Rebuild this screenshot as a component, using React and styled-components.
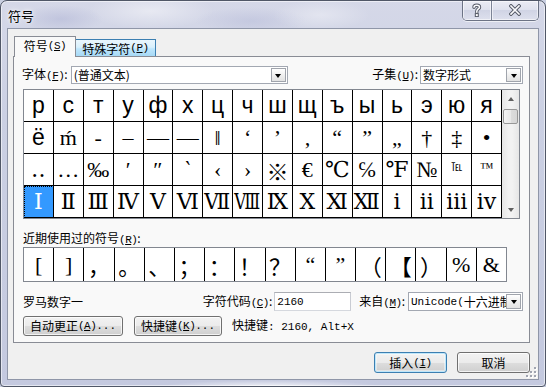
import React, { useLayoutEffect, useRef, useState } from 'react';
import styled, { createGlobalStyle, css } from 'styled-components';

const GlobalStyle = createGlobalStyle`
  html, body { margin: 0; padding: 0; background: #c9cfe1; }
  body {
    font-family: "Noto Sans CJK SC", "Liberation Sans", sans-serif;
    font-size: 12px;
    color: #000;
  }
  * { box-sizing: border-box; }
`;

const Window = styled.div`
  position: relative;
  width: 546px;
  height: 387px;
  display: flex;
  flex-direction: column;
  border: 1px solid #505767;
  border-radius: 7px 7px 4px 4px;
  overflow: hidden;
  background:
    radial-gradient(ellipse 90px 26px at 150px 10px, rgba(255,255,255,0.45), transparent 70%),
    radial-gradient(ellipse 70px 22px at 320px 14px, rgba(255,255,255,0.35), transparent 70%),
    radial-gradient(ellipse 60px 20px at 60px 18px, rgba(170,175,210,0.45), transparent 70%),
    radial-gradient(ellipse 80px 20px at 250px 20px, rgba(170,175,210,0.35), transparent 70%),
    radial-gradient(ellipse 160px 10px at 270px 386px, rgba(255,255,255,0.8), transparent 70%),
    linear-gradient(180deg, #d5d8e8 0%, #cbd0e3 30%, #c4c9df 100%);
  box-shadow: inset 0 0 0 1px rgba(255,255,255,0.55);
`;

const TitleBar = styled.div`
  height: 27px;
  display: flex;
  align-items: flex-start;
  padding-left: 7px;
`;

const Title = styled.div`
  padding-top: 6px;
  line-height: 17px;
  font-size: 13px;
  color: #000;
  text-shadow: 0 0 6px rgba(255,255,255,0.95), 0 0 3px rgba(255,255,255,0.9);
`;

const CaptionGroup = styled.div`
  margin-left: auto;
  margin-right: 6px;
  margin-top: -1px;
  display: flex;
  height: 21px;
  border: 1px solid #6c7385;
  border-top: none;
  border-radius: 0 0 5px 5px;
  overflow: hidden;
  box-shadow: 0 1px 0 rgba(255,255,255,0.6);
`;

const CaptionButton = styled.div`
  width: ${p => p.$w}px;
  height: 100%;
  display: flex;
  align-items: center;
  justify-content: center;
  background: linear-gradient(180deg, rgba(255,255,255,0.55) 0%, rgba(255,255,255,0.25) 50%, rgba(200,205,222,0.35) 51%, rgba(230,232,242,0.55) 100%);
  box-shadow: inset 0 0 0 1px rgba(255,255,255,0.55);
  & + & { border-left: 1px solid #7d8496; }
`;

const Client = styled.div`
  position: relative;
  flex: 1;
  margin: 0 6px 6px 6px;
  background: #f0f0f0;
  border: 1px solid #8f96a8;
  padding: 7px 0 6px 5px;
  display: flex;
  flex-direction: column;
`;

const TabStrip = styled.div`
  display: flex;
  align-items: flex-end;
  height: 21px;
  padding-left: 1px;
  margin-bottom: -1px;
  position: relative;
  z-index: 1;
`;

const Tab = styled.div`
  display: flex;
  align-items: center;
  justify-content: center;
  border: 1px solid #898c95;
  white-space: nowrap;
  ${p => p.$active ? css`
    width: 62px;
    height: 21px;
    border-bottom: none;
    background: #f9f9f9;
    padding-bottom: 3px;
  ` : css`
    width: 80px;
    height: 17px;
    margin-bottom: 1px;
    background: linear-gradient(180deg, #eaf6fd 0%, #d9f0fc 45%, #bee6fd 55%, #a7d9f5 100%);
    border-color: #3c7fb1;
    border-left: none;
    border-bottom: none;
  `}
`;

const Panel = styled.div`
  width: 517px;
  height: 287px;
  border: 1px solid #898c95;
  background: #f9f9f9;
  padding: 9px 6px 6px 9px;
  display: flex;
  flex-direction: column;
`;

const Row = styled.div`
  display: flex;
  align-items: center;
  height: ${p => p.$h}px;
  margin-top: ${p => p.$mt || 0}px;
`;

const Label = styled.span`
  white-space: nowrap;
  line-height: 14px;
  margin-left: ${p => p.$ml || 0}px;
  margin-right: ${p => p.$mr || 0}px;
`;

const Mn = styled.span`
  font-family: "Liberation Mono", monospace;
  font-size: 11px;
  letter-spacing: -0.5px;
  u { text-decoration: underline; text-underline-offset: 1px; }
`;

const Mono = styled.span`
  font-family: "Liberation Mono", "Noto Sans CJK SC", monospace;
  font-size: 11px;
  white-space: nowrap;
`;

const Combo = styled.div`
  width: ${p => p.$w}px;
  height: ${p => p.$h || 18}px;
  display: flex;
  align-items: stretch;
  background: #fff;
  border: 1px solid #a3a8b2;
  padding: 1px;
`;

const ComboText = styled.div`
  flex: 1;
  min-width: 0;
  white-space: nowrap;
  padding-left: 1px;
  display: flex;
  align-items: center;
  line-height: 14px;
  ${p => p.$clip && css`overflow: hidden;`}
`;

const ComboArrow = styled.div`
  flex: none;
  width: 15px;
  border: 1px solid #a0a4ac;
  background: linear-gradient(180deg, #ffffff 0%, #f0f0f0 50%, #e2e2e2 100%);
  display: flex;
  align-items: center;
  justify-content: center;
  &::after {
    content: "";
    border-left: 3.5px solid transparent;
    border-right: 3.5px solid transparent;
    border-top: 4px solid #000;
    margin-top: 1px;
  }
`;

const GridBox = styled.div`
  margin-top: 5px;
  width: 497px;
  height: 130px;
  border: 1px solid #828790;
  background: #fff;
  display: flex;
`;

const CellGrid = styled.div`
  width: 478px;
  display: grid;
  grid-template-columns: repeat(16, 1fr);
  grid-auto-rows: 32px;
`;

const Cell = styled.div`
  border-right: 1px solid #000;
  border-bottom: 1px solid #000;
  display: flex;
  align-items: center;
  justify-content: center;
  overflow: hidden;
  white-space: nowrap;
  ${p => p.$kind === 'cyr' ? css`
    font-family: "Liberation Sans", "DejaVu Sans", sans-serif;
    font-size: 23px;
  ` : css`
    font-family: "Liberation Serif", "DejaVu Serif", "Noto Sans CJK SC", serif;
    font-size: 22px;
  `}
  ${p => p.$selected && css`
    background: #3399ff;
    color: #fff;
    outline: 1px dotted #000;
    outline-offset: -1px;
  `}
`;

const Glyph = styled.span`
  display: inline-block;
  transform-origin: center;
  ${p => p.$tiny && css`
    font-size: 11px;
    align-self: flex-start;
    margin-top: 4px;
  `}
  ${p => p.$small && css`
    font-size: 14px;
    align-self: flex-start;
    margin-top: 6px;
  `}
`;

const ScrollBar = styled.div`
  width: 17px;
  background: linear-gradient(90deg, #e6e6e6, #f2f2f2 40%, #f2f2f2 60%, #e6e6e6);
  display: flex;
  flex-direction: column;
  align-items: center;
`;

const ScrollArrow = styled.div`
  width: 17px;
  height: 17px;
  display: flex;
  align-items: center;
  justify-content: center;
  margin-top: ${p => p.$down ? 'auto' : '0'};
  &::after {
    content: "";
    border-left: 3.5px solid transparent;
    border-right: 3.5px solid transparent;
    ${p => p.$down ? css`border-top: 4px solid #606060;` : css`border-bottom: 4px solid #606060;`}
  }
`;

const Thumb = styled.div`
  width: 15px;
  height: 15px;
  margin-top: 2px;
  border: 1px solid #979797;
  border-radius: 2px;
  background: linear-gradient(90deg, #f4f4f4, #e8e8e8 50%, #dcdcdc 51%, #d6d6d6);
`;

const RecentBox = styled.div`
  margin-top: 1px;
  width: 484px;
  height: 35px;
  border: 1px solid #828790;
  background: #fff;
  display: flex;
`;

const RecentCell = styled.div`
  flex: 1;
  display: flex;
  align-items: center;
  justify-content: center;
  font-family: "Liberation Serif", "Noto Sans CJK SC", serif;
  font-size: 22px;
  & + & { border-left: 1px solid #000; }
`;

const TextInput = styled.div`
  width: ${p => p.$w}px;
  height: 19px;
  background: #fff;
  border: 1px solid #abadb3;
  border-color: #abadb3 #c9ccd3 #d5d8de #c9ccd3;
  padding-left: 2px;
  display: flex;
  align-items: center;
`;

const Button = styled.div`
  width: ${p => p.$w}px;
  height: ${p => p.$h || 20}px;
  margin-left: ${p => p.$ml || 0}px;
  display: flex;
  align-items: center;
  justify-content: center;
  white-space: nowrap;
  line-height: 14px;
  border: 1px solid #707070;
  border-radius: 3px;
  background: linear-gradient(180deg, #f2f2f2 0%, #ebebeb 50%, #dddddd 51%, #cfcfcf 100%);
  box-shadow: inset 0 0 0 1px rgba(255,255,255,0.75);
  ${p => p.$default && css`
    border-color: #3c7fb1;
    box-shadow: inset 0 0 0 1px #bfe7fb, inset 0 0 0 2px rgba(255,255,255,0.4);
  `}
`;

const DialogButtons = styled.div`
  margin-top: 9px;
  display: flex;
  justify-content: flex-end;
  gap: 10px;
  padding-right: 8px;
`;

const Grip = styled.svg`
  position: absolute;
  right: 1px;
  bottom: 1px;
`;

const Spacer = styled.div`
  flex: 1;
`;

const rows = [
  { kind: 'cyr', chars: 'рстуфхцчшщъыьэюя'.split('') },
  { kind: 'sym', chars: ['ё', 'ḿ', '‐', '–', '—', '―', '‖', '‘', '’', '‚', '“', '”', '„', '†', '‡', '•'] },
  { kind: 'sym', chars: ['‥', '…', '‰', '′', '″', '‵', '‹', '›', '※', '€', '℃', '℅', '℉', '№', '℡', '™'] },
  { kind: 'sym', chars: ['Ⅰ', 'Ⅱ', 'Ⅲ', 'Ⅳ', 'Ⅴ', 'Ⅵ', 'Ⅶ', 'Ⅷ', 'Ⅸ', 'Ⅹ', 'Ⅺ', 'Ⅻ', 'ⅰ', 'ⅱ', 'ⅲ', 'ⅳ'] },
];

const recent = ['[', ']', '，', '。', '、', '；', '：', '！', '？', '“', '”', '（', '【', '）', '%', '&'];

const M = ({ k }) => (
  <Mn>(<u>{k}</u>)</Mn>
);

// Squeezes a glyph horizontally when it is wider than its cell (measured at run time).
function FitGlyph({ children, max = 26, ...rest }) {
  const ref = useRef(null);
  const [scale, setScale] = useState(1);
  useLayoutEffect(() => {
    if (ref.current) {
      const w = ref.current.getBoundingClientRect().width;
      if (w > max) setScale(max / w);
    }
  }, [max]);
  return (
    <Glyph ref={ref} {...rest} style={scale !== 1 ? { transform: `scaleX(${scale})` } : undefined}>
      {children}
    </Glyph>
  );
}

function HelpIcon() {
  const d = 'M3 4.2 C3 1.5 8.5 1.5 8.5 4.2 C8.5 6 5.8 6 5.8 8.3 L5.8 9.2';
  return (
    <svg width="12" height="14" viewBox="0 0 12 14">
      <path d={d} fill="none" stroke="#555a66" strokeWidth="3.4" strokeLinecap="round" />
      <rect x="4.3" y="10.6" width="3" height="3" fill="#fff" stroke="#555a66" strokeWidth="1" />
      <path d={d} fill="none" stroke="#fbfbfd" strokeWidth="1.5" strokeLinecap="round" />
    </svg>
  );
}

function CloseIcon() {
  const d = 'M2 2 L10 10 M10 2 L2 10';
  return (
    <svg width="12" height="12" viewBox="0 0 12 12">
      <path d={d} fill="none" stroke="#555a66" strokeWidth="3.6" strokeLinecap="square" />
      <path d={d} fill="none" stroke="#fbfbfd" strokeWidth="1.6" strokeLinecap="square" />
    </svg>
  );
}

export default function App() {
  return (
    <>
      <GlobalStyle />
      <Window>
        <TitleBar>
          <Title>符号</Title>
          <CaptionGroup>
            <CaptionButton $w={28}><HelpIcon /></CaptionButton>
            <CaptionButton $w={47}><CloseIcon /></CaptionButton>
          </CaptionGroup>
        </TitleBar>
        <Client>
          <TabStrip>
            <Tab $active>符号<M k="S" /></Tab>
            <Tab>特殊字符<M k="P" /></Tab>
          </TabStrip>
          <Panel>
            <Row $h={18}>
              <Label $ml={-1} $mr={3}>字体<M k="F" />:</Label>
              <Combo $w={217}>
                <ComboText>(普通文本)</ComboText>
                <ComboArrow />
              </Combo>
              <Spacer />
              <Label $mr={2}>子集<M k="U" />:</Label>
              <Combo $w={103}>
                <ComboText>数字形式</ComboText>
                <ComboArrow />
              </Combo>
            </Row>
            <GridBox>
              <CellGrid>
                {rows.map((r, ri) =>
                  r.chars.map((c, ci) => (
                    <Cell
                      key={`${ri}-${ci}`}
                      $kind={ri === 1 && ci === 0 ? 'cyr' : r.kind}
                      $selected={ri === 3 && ci === 0}
                    >
                      <FitGlyph $tiny={c === '℡'} $small={c === '™'}>{c}</FitGlyph>
                    </Cell>
                  ))
                )}
              </CellGrid>
              <ScrollBar>
                <ScrollArrow />
                <Thumb />
                <ScrollArrow $down />
              </ScrollBar>
            </GridBox>
            <Row $h={14} $mt={13}>
              <Label>近期使用过的符号<M k="R" />:</Label>
            </Row>
            <RecentBox>
              {recent.map((c, i) => (
                <RecentCell key={i}>{c}</RecentCell>
              ))}
            </RecentBox>
            <Row $h={19} $mt={10}>
              <Label>罗马数字一</Label>
              <Spacer />
              <Label $mr={2}>字符代码<M k="C" />:</Label>
              <TextInput $w={77}><Mono>2160</Mono></TextInput>
              <Label $ml={8} $mr={3}>来自<M k="M" />:</Label>
              <Combo $w={115} $h={19}>
                <ComboText $clip><Mono>Unicode(</Mono>十六进制)</ComboText>
                <ComboArrow />
              </Combo>
            </Row>
            <Row $h={20} $mt={5}>
              <Button $w={100}>自动更正<M k="A" /><Mono>...</Mono></Button>
              <Button $w={88} $ml={11}>快捷键<M k="K" /><Mono>...</Mono></Button>
              <Label $ml={10}>快捷键<Mono>: 2160,  Alt+X</Mono></Label>
            </Row>
          </Panel>
          <DialogButtons>
            <Button $w={73} $h={21} $default>插入<M k="I" /></Button>
            <Button $w={73} $h={21}>取消</Button>
          </DialogButtons>
          <Grip width="12" height="12" viewBox="0 0 12 12">
            {[[10, 2], [10, 6], [6, 6], [10, 10], [6, 10], [2, 10]].map(([x, y], i) => (
              <g key={i}>
                <rect x={x} y={y} width="2" height="2" fill="#fff" />
                <rect x={x - 1} y={y - 1} width="2" height="2" fill="#a0a4b0" />
              </g>
            ))}
          </Grip>
        </Client>
      </Window>
    </>
  );
}
